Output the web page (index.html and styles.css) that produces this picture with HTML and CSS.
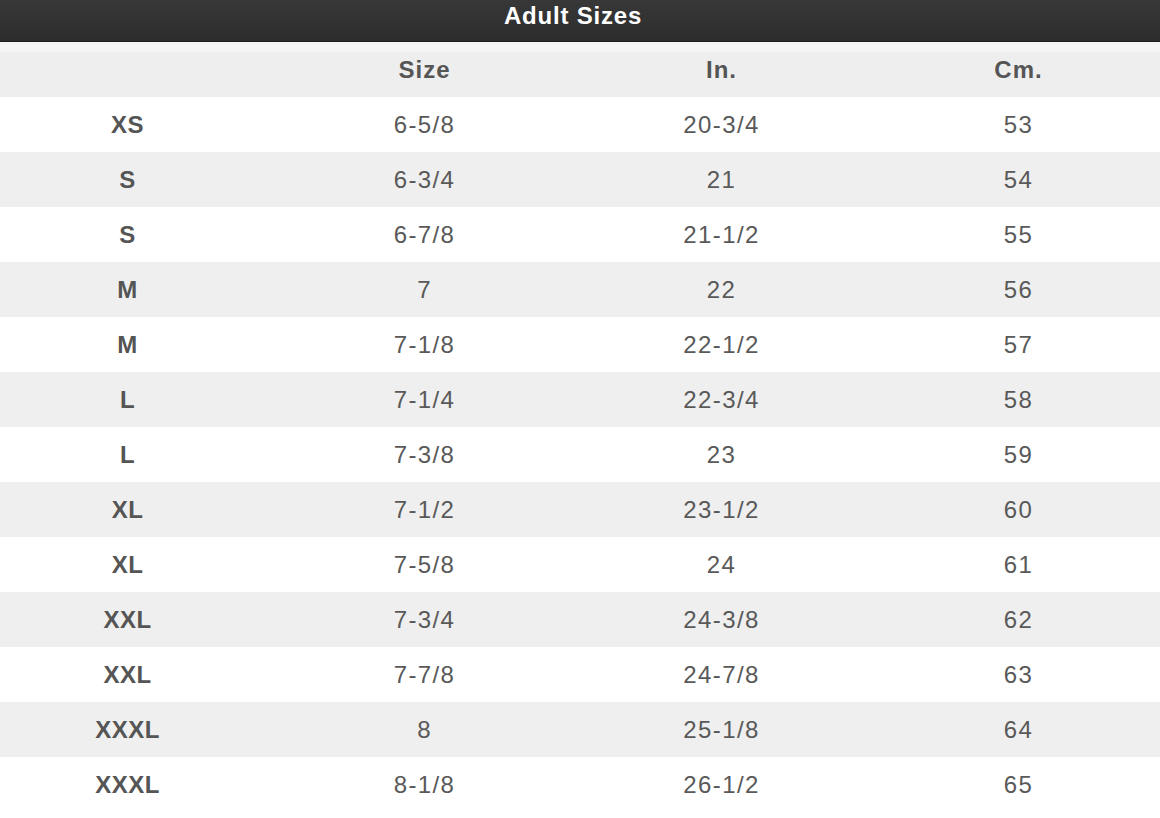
FILE: index.html
```html
<!DOCTYPE html>
<html>
<head>
<meta charset="utf-8">
<link rel="stylesheet" href="styles.css">
</head>
<body>
<div class="chart">
  <div class="title">Adult Sizes</div>
  <div class="row head"><div></div><div>Size</div><div>In.</div><div>Cm.</div></div>
  <div class="row"><div class="lbl">XS</div><div>6-5/8</div><div>20-3/4</div><div>53</div></div>
  <div class="row alt"><div class="lbl">S</div><div>6-3/4</div><div>21</div><div>54</div></div>
  <div class="row"><div class="lbl">S</div><div>6-7/8</div><div>21-1/2</div><div>55</div></div>
  <div class="row alt"><div class="lbl">M</div><div>7</div><div>22</div><div>56</div></div>
  <div class="row"><div class="lbl">M</div><div>7-1/8</div><div>22-1/2</div><div>57</div></div>
  <div class="row alt"><div class="lbl">L</div><div>7-1/4</div><div>22-3/4</div><div>58</div></div>
  <div class="row"><div class="lbl">L</div><div>7-3/8</div><div>23</div><div>59</div></div>
  <div class="row alt"><div class="lbl">XL</div><div>7-1/2</div><div>23-1/2</div><div>60</div></div>
  <div class="row"><div class="lbl">XL</div><div>7-5/8</div><div>24</div><div>61</div></div>
  <div class="row alt"><div class="lbl">XXL</div><div>7-3/4</div><div>24-3/8</div><div>62</div></div>
  <div class="row"><div class="lbl">XXL</div><div>7-7/8</div><div>24-7/8</div><div>63</div></div>
  <div class="row alt"><div class="lbl">XXXL</div><div>8</div><div>25-1/8</div><div>64</div></div>
  <div class="row"><div class="lbl">XXXL</div><div>8-1/8</div><div>26-1/2</div><div>65</div></div>
</div>
</body>
</html>
```
FILE: styles.css
```css
html, body {
  margin: 0;
  padding: 0;
  background: #fff;
  overflow: hidden;
}
body {
  width: 1160px;
  height: 818px;
  font-family: "Liberation Sans", Arial, Helvetica, sans-serif;
  color: #595959;
}
.chart {
  width: 1188px;
  margin-left: -21px;
}
.title {
  height: 42px;
  background: linear-gradient(#383838, #2c2c2c);
  color: #fff;
  font-weight: bold;
  font-size: 24px;
  letter-spacing: 0.8px;
  text-align: center;
  line-height: 32px;
  border-bottom: 1px solid #1e1e1e;
  box-sizing: border-box;
}
.row {
  display: grid;
  grid-template-columns: repeat(4, 1fr);
  height: 55px;
  align-items: center;
  font-size: 24px;
  letter-spacing: 1.4px;
  background: #fff;
}
.row > div {
  text-align: center;
}
.row.alt {
  background: #efefef;
}
.row.head {
  background: linear-gradient(#f5f5f5 0, #f5f5f5 10px, #eeeeee 10px);
  font-weight: bold;
  letter-spacing: 1px;
  color: #555;
}
.lbl {
  font-weight: bold;
  letter-spacing: 0.5px;
  color: #555;
}
```
